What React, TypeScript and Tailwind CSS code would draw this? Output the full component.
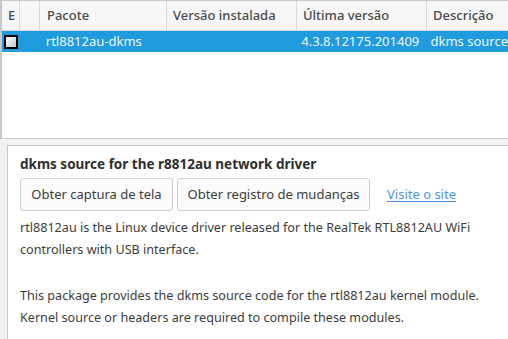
import React from "react";

export default function App() {
  const font = { fontFamily: '"Noto Sans", "Open Sans", sans-serif' };
  return (
    <div
      className="w-[508px] h-[339px] overflow-hidden bg-white text-[#3c3c3c] flex flex-col"
      style={font}
    >
      {/* table frame */}
      <div className="h-[139px] shrink-0 border-l-2 border-t border-b border-[#c8c8c8] bg-white flex flex-col">
        <div className="h-[30px] flex text-[13px] font-medium text-[#4a4a4a] bg-[#f7f7f7] border-b border-[#d9d9d9]">
          <div className="w-[18px] border-r border-[#d9d9d9] flex items-center pl-[6px]">E</div>
          <div className="w-[20px] border-r border-[#d9d9d9]"></div>
          <div className="w-[127px] border-r border-[#d9d9d9] flex items-center pl-[7px]">Pacote</div>
          <div className="w-[130px] border-r border-[#d9d9d9] flex items-center pl-[6px]">Versão instalada</div>
          <div className="w-[130px] border-r border-[#d9d9d9] flex items-center pl-[6px]">Última versão</div>
          <div className="flex-1 flex items-center pl-[6px] whitespace-nowrap overflow-hidden">Descrição</div>
        </div>
        <div className="h-[21px] flex bg-[#1f9bde] text-[13px] text-[#eef7fc] whitespace-nowrap overflow-hidden">
          <div className="w-[38px] flex items-center pl-[2px]">
            <div className="w-[14px] h-[14px] border-2 border-black bg-gradient-to-br from-white to-[#c8c8c8]"></div>
          </div>
          <div className="w-[128px] flex items-center pl-[6px]">rtl8812au-dkms</div>
          <div className="w-[130px]"></div>
          <div className="w-[130px] flex items-center pl-[5px]">4.3.8.12175.201409</div>
          <div className="flex-1 flex items-center pl-[5px]">dkms source</div>
        </div>
      </div>
      {/* pane handle */}
      <div className="flex-1 bg-[#f2f2f2] pt-[6px] pl-[7px] flex flex-col">
        <div className="flex-1 bg-white border-l border-t border-[#c8c8c8] pl-[12px] pt-[8px]">
          <div className="text-[13.5px] font-bold text-[#2e2e2e] leading-[20px]">
            dkms source for the r8812au network driver
          </div>
          <div className="flex items-center mt-[4px] text-[13px]">
            <button className="h-[33px] w-[153px] border border-[#cdcdcd] rounded-[3px] bg-[#fbfbfb] text-[#3c3c3c]">
              Obter captura de tela
            </button>
            <button className="ml-[4px] h-[33px] w-[193px] border border-[#cdcdcd] rounded-[3px] bg-[#fbfbfb] text-[#3c3c3c]">
              Obter registro de mudanças
            </button>
            <span className="ml-[17px] text-[#5294e2] underline decoration-[#4a8ae0] underline-offset-2">
              Visite o site
            </span>
          </div>
          <div className="mt-[6px] text-[12.6px] leading-[22px] text-[#3c3c3c] pr-[8px]">
            <p>
              rtl8812au is the Linux device driver released for the RealTek RTL8812AU WiFi
              controllers with USB interface.
            </p>
            <p className="mt-[24px]">
              This package provides the dkms source code for the rtl8812au kernel module.
              Kernel source or headers are required to compile these modules.
            </p>
          </div>
        </div>
      </div>
    </div>
  );
}
